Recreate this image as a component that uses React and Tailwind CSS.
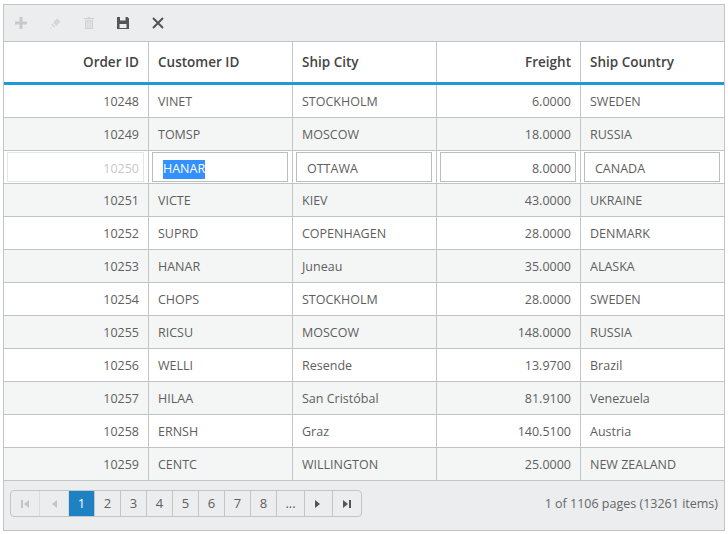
const rows = [
  ['10248', 'VINET', 'STOCKHOLM', '6.0000', 'SWEDEN'],
  ['10249', 'TOMSP', 'MOSCOW', '18.0000', 'RUSSIA'],
  ['10250', 'HANAR', 'OTTAWA', '8.0000', 'CANADA'],
  ['10251', 'VICTE', 'KIEV', '43.0000', 'UKRAINE'],
  ['10252', 'SUPRD', 'COPENHAGEN', '28.0000', 'DENMARK'],
  ['10253', 'HANAR', 'Juneau', '35.0000', 'ALASKA'],
  ['10254', 'CHOPS', 'STOCKHOLM', '28.0000', 'SWEDEN'],
  ['10255', 'RICSU', 'MOSCOW', '148.0000', 'RUSSIA'],
  ['10256', 'WELLI', 'Resende', '13.9700', 'Brazil'],
  ['10257', 'HILAA', 'San Cristóbal', '81.9100', 'Venezuela'],
  ['10258', 'ERNSH', 'Graz', '140.5100', 'Austria'],
  ['10259', 'CENTC', 'WILLINGTON', '25.0000', 'NEW ZEALAND'],
]

const widths = ['w-[145px]', 'w-[144px]', 'w-[144px]', 'w-[144px]', 'flex-1']
const aligns = ['justify-end text-right', 'justify-start', 'justify-start', 'justify-end text-right', 'justify-start']

function Cell({ i, children, className = '' }) {
  return (
    <div className={`${widths[i]} ${aligns[i]} ${i < 4 ? 'border-r border-[#c4c4c4]' : ''} flex h-full items-center px-[9px] pt-[2px] ${className}`}>
      {children}
    </div>
  )
}

function EditRow({ row }) {
  return (
    <div className="flex h-[33px] border-b border-[#c4c4c4] bg-white">
      {row.map((value, i) => (
        <div key={i} className={`${widths[i]} ${i < 4 ? 'border-r border-[#c4c4c4]' : ''} flex h-full items-center pl-[3px] pr-[4px]`}>
          <div className={`flex h-[30px] w-full items-center border pt-[5px] ${i === 0 ? 'border-[#e6e6e6] text-[#c8c8c8]' : 'border-[#bdbdbd]'} ${aligns[i]} ${i === 0 || i === 3 ? 'pr-[4px]' : 'pl-[10px]'}`}>
            {i === 1 ? <span className="bg-[#3390ff] text-white">{value}</span> : value}
          </div>
        </div>
      ))}
    </div>
  )
}

function PagerButton({ children, active, className = 'w-[26px]' }) {
  return (
    <div className={`flex h-full items-center justify-center border-r border-[#c4c4c4] ${active ? 'bg-[#1e81c4] text-white' : ''} ${className}`}>
      {children}
    </div>
  )
}

export default function App() {
  return (
    <div className="h-[534px] w-[728px] overflow-hidden bg-white pl-[3px] pr-[3px] pt-[4px] font-['Open_Sans',sans-serif] text-[12.5px] text-[#5e5e5e]">
      <div className="h-[527px] border border-[#c4c4c4]">
        {/* toolbar */}
        <div className="flex h-[37px] items-center border-b border-[#c4c4c4] bg-[#ecedef]">
          <svg className="ml-[11px]" width="12" height="12" viewBox="0 0 12 12"><path d="M4.5 0h3v4.5H12v3H7.5V12h-3V7.5H0v-3h4.5z" fill="#c9c9c9" /></svg>
          <svg className="ml-[22px]" width="13" height="13" viewBox="0 0 13 13"><path d="M8 1.5l3.5 3-4 4.5-3.5-3zM3.4 6.8l2.800 2.600-1.200 1-2.800-2.500zM2 10l1 1-2 1.500z" fill="#d6d6d6" /></svg>
          <svg className="ml-[22px]" width="10" height="12" viewBox="0 0 10 12"><path d="M3.500 0h3v1H10v1.200H0V1h3.500zM1 3.200h8V12H1zM2.400 4.500V11h1V4.500zM4.500 4.500V11h1V4.500zM6.600 4.500V11h1V4.500z" fill="#d2d2d2" fillRule="evenodd" /></svg>
          <svg className="ml-[23px]" width="12" height="12" viewBox="0 0 12 12"><path d="M0 0h10.500L12 1.500V12H0zM3 0v3.500h5.500V0zM2.500 7v4h7V7z" fill="#555" fillRule="evenodd" /></svg>
          <svg className="ml-[23px]" width="12" height="12" viewBox="0 0 12 12"><path d="M1 1l10 10M11 1L1 11" stroke="#555" strokeWidth="2" fill="none" /></svg>
        </div>
        {/* header */}
        <div className="flex h-[43px] border-b-[3px] border-[#1a9ad9] bg-white text-[13.500px] font-semibold text-[#444]">
          {['Order ID', 'Customer ID', 'Ship City', 'Freight', 'Ship Country'].map((title, i) => (
            <Cell key={title} i={i} className="pb-[2px]">{title}</Cell>
          ))}
        </div>
        {/* rows */}
        {rows.map((row, r) =>
          r === 2 ? (
            <EditRow key={row[0]} row={row} />
          ) : (
            <div key={row[0]} className={`flex h-[33px] border-b border-[#c4c4c4] ${r % 2 === 1 ? 'bg-[#f4f6f5]' : 'bg-white'}`}>
              {row.map((value, i) => (
                <Cell key={i} i={i}>{value}</Cell>
              ))}
            </div>
          )
        )}
        {/* pager */}
        <div className="flex h-[49px] items-start justify-between bg-[#ecedef] pl-[6px] pr-[6px] pt-[9px]">
          <div className="flex h-[27px] items-stretch overflow-hidden rounded-[4px] border border-[#c4c4c4] text-[13px]">
            <PagerButton className="w-[29px] border-[#dcdcdc]">
              <svg width="8" height="8" viewBox="0 0 8 8"><path d="M0 0h2v8H0zM8 0v8L3 4z" fill="#c4c4c4" /></svg>
            </PagerButton>
            <PagerButton className="w-[29px] border-[#dcdcdc]">
              <svg width="5" height="8" viewBox="0 0 5 8"><path d="M5 0v8L0 4z" fill="#c4c4c4" /></svg>
            </PagerButton>
            <PagerButton active>1</PagerButton>
            {['2', '3', '4', '5', '6', '7', '8'].map((n) => (
              <PagerButton key={n}>{n}</PagerButton>
            ))}
            <PagerButton className="w-[28px]">...</PagerButton>
            <PagerButton className="w-[28px] pr-[3px]">
              <svg width="5" height="8" viewBox="0 0 5 8"><path d="M0 0v8l5-4z" fill="#555" /></svg>
            </PagerButton>
            <PagerButton className="w-[28px] border-r-0">
              <svg width="8" height="8" viewBox="0 0 8 8"><path d="M0 0v8l5-4zM6 0h2v8H6z" fill="#555" /></svg>
            </PagerButton>
          </div>
          <span className="pt-[5px] text-[#666]">1 of 1106 pages (13261 items)</span>
        </div>
      </div>
    </div>
  )
}
